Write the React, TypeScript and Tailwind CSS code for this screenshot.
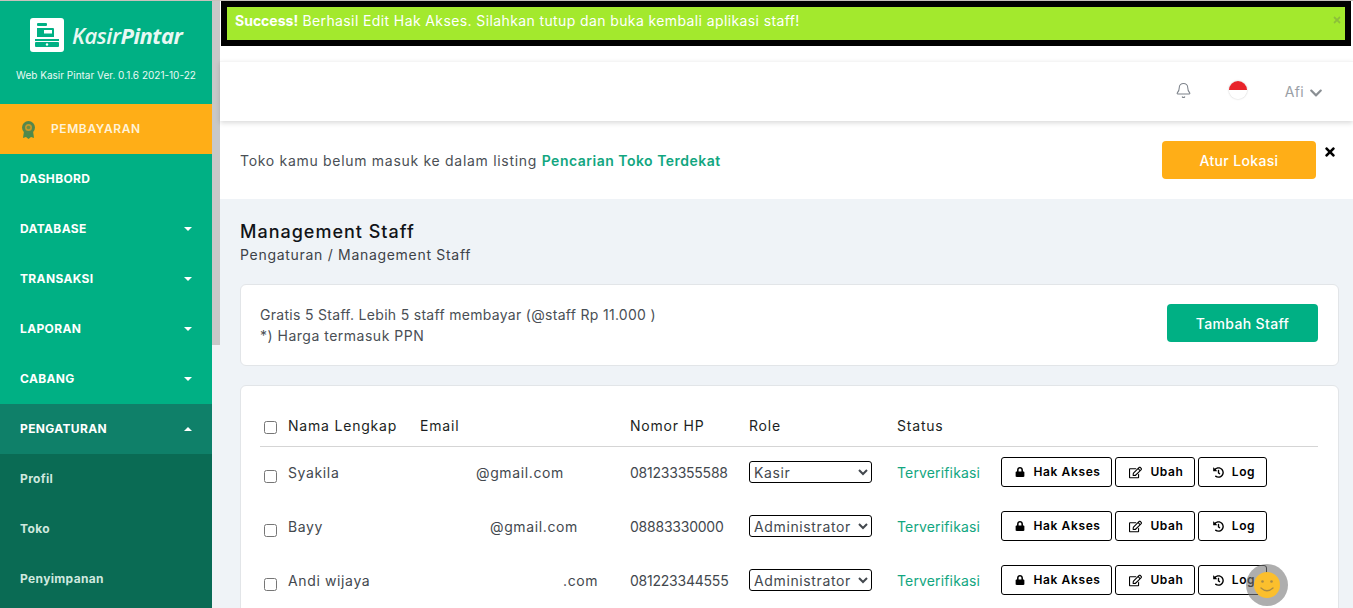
import { Bell } from 'lucide-react'
import { FaChevronDown, FaHistory, FaLock, FaRegEdit, FaTimes } from 'react-icons/fa'

const MENU = [
  { label: 'DASHBORD', caret: false },
  { label: 'DATABASE', caret: true },
  { label: 'TRANSAKSI', caret: true },
  { label: 'LAPORAN', caret: true },
  { label: 'CABANG', caret: true },
]

const SUB_MENU = ['Profil', 'Toko', 'Penyimpanan']

const STAFF = [
  { name: 'Syakila', email: '@gmail.com', pad: 'pl-[56px]', phone: '081233355588', role: 'Kasir' },
  { name: 'Bayy', email: '@gmail.com', pad: 'pl-[70px]', phone: '08883330000', role: 'Administrator' },
  { name: 'Andi wijaya', email: '.com', pad: 'pl-[143px]', phone: '081223344555', role: 'Administrator' },
]

const COLS = 'grid grid-cols-[24px_132px_210px_119px_148px_104px_1fr] items-center'

function Caret({ up }: { up?: boolean }) {
  return (
    <svg width="8" height="4" viewBox="0 0 8 4" className={up ? 'rotate-180' : ''}>
      <path d="M0 0h8L4 4z" fill="currentColor" />
    </svg>
  )
}

function Logo() {
  return (
    <div className="flex items-center gap-[8px] pt-[17px] pl-[30px]">
      <div className="w-[34px] h-[34px] bg-white rounded-[3px] flex items-center justify-center">
        <svg width="26" height="26" viewBox="0 0 26 26" fill="#00b084">
          <rect x="3" y="1" width="10" height="3" rx="1" />
          <path d="M3 6h16a1 1 0 0 1 1 1v8H3z" />
          <rect x="10" y="8" width="8" height="3.500" fill="#fff" />
          <rect x="1" y="17" width="24" height="2" />
          <rect x="1" y="20" width="24" height="5" rx="1" />
          <circle cx="13" cy="22.500" r="1.200" fill="#fff" />
        </svg>
      </div>
      <span className="font-['Open_Sans',sans-serif] italic font-semibold text-[22px] leading-[34px] text-[#e8f8f3] tracking-[-0.02em]">
        Kasir<span className="font-bold">Pintar</span>
      </span>
    </div>
  )
}

function ActionButton({ icon, label, width }: { icon: React.ReactNode; label: string; width: string }) {
  return (
    <button className={`${width} h-[30px] border border-black rounded-[3px] bg-white flex items-center justify-center gap-[8px] pl-[3px] text-[12px] font-semibold text-black`}>
      {icon}
      {label}
    </button>
  )
}

export default function App() {
  return (
    <div className="h-screen overflow-hidden flex flex-col bg-white font-['Inter',sans-serif] text-[14px] tracking-[0.045em]">
      <div className="h-px bg-[#c8c2bd]" />
      <div className="flex flex-1 min-h-0">

        {/* Sidebar */}
        <aside className="w-[212px] shrink-0 bg-[#00b084] text-white flex flex-col tracking-[0.35px]">
          <div className="h-[103px]">
            <Logo />
            <p className="text-[10px] text-center mt-[16px] tracking-normal text-[#eafaf5]">Web Kasir Pintar Ver. 0.1.6 2021-10-22</p>
          </div>
          <div className="h-[50px] bg-[#ffae17] flex items-center pl-[20px] gap-[14px] text-[12px] font-semibold text-[#fff3d8] tracking-[0.6px]">
            <svg width="17" height="19" viewBox="0 0 17 19">
              <path d="M4 11l-1 7 3-1 2.500 2 2.500-2 3 1-1-7z" fill="#4e8a4c" />
              <circle cx="8.500" cy="7.500" r="6.500" fill="#55874c" />
              <circle cx="8.500" cy="7.500" r="3.500" fill="#c59a2a" />
              <circle cx="8.500" cy="7.500" r="1.800" fill="#6f8f3f" />
            </svg>
            PEMBAYARAN
          </div>
          {MENU.map(m => (
            <div key={m.label} className="h-[50px] flex items-center justify-between pl-[20px] pr-[20px] text-[12px] font-bold">
              {m.label}
              {m.caret && <Caret />}
            </div>
          ))}
          <div className="h-[50px] bg-[#0f8069] flex items-center justify-between pl-[20px] pr-[20px] text-[12px] font-bold">
            PENGATURAN
            <Caret up />
          </div>
          <div className="flex-1 bg-[#0a6b54] text-[#cfe8df]">
            {SUB_MENU.map(s => (
              <div key={s} className="h-[50px] flex items-center pl-[20px] text-[12px] font-bold">{s}</div>
            ))}
          </div>
        </aside>

        {/* Scrollbar */}
        <div className="w-[8px] shrink-0 bg-[#f1f3f5]">
          <div className="h-[344px] bg-[#c8c8c8]" />
        </div>

        <main className="flex-1 min-w-0 bg-[#eff3f7]">
          {/* Alert */}
          <div className="bg-white h-[60px]">
            <div className="ml-px mr-[2px] h-[45px] border-[6px] border-black bg-[#a3e92d] flex items-center justify-between pl-[8px] pr-[3px] pb-[7px] text-white">
              <p className="text-[14px] tracking-[0.39px]"><strong className="font-bold tracking-normal">Success!</strong> Berhasil Edit Hak Akses. Silahkan tutup dan buka kembali aplikasi staff!</p>
              <FaTimes className="text-[#8cc03a] text-[10px]" />
            </div>
          </div>

          {/* Topbar */}
          <header className="relative h-[60px] bg-white border-t border-[#f5f5f5] shadow-[0_2px_5px_rgba(0,0,0,0.15)] flex items-center justify-end pr-[30px] text-[#9aa0a6]">
            <Bell size={17} strokeWidth={1.5} className="mr-[37px] mb-[3px] text-[#7c828a]" />
            <div className="w-[18px] h-[18px] rounded-full overflow-hidden mr-[38px] shadow-[0_0_2px_rgba(0,0,0,0.25)] mb-[3px]">
              <div className="h-[9px] bg-[#e8232a]" />
              <div className="h-[9px] bg-white" />
            </div>
            <span className="mr-[5px] tracking-[0.35px]">Afi</span>
            <FaChevronDown className="mt-[3px] text-[#8a8f94] text-[14px]" />
          </header>

          {/* Location banner */}
          <div className="h-[78px] bg-white flex items-center justify-between pl-[20px] pr-[37px]">
            <p className="text-[#4a4f55] tracking-[0.7px]">Toko kamu belum masuk ke dalam listing <span className="font-semibold text-[#12a67f] tracking-[0.5px]">Pencarian Toko Terdekat</span></p>
            <div className="relative">
              <button className="w-[154px] h-[38px] rounded-[4px] bg-[#ffae17] text-white font-medium tracking-[0.35px]">Atur Lokasi</button>
              <FaTimes className="absolute left-[161px] top-[4px] text-black text-[14px]" />
            </div>
          </div>

          <div className="pl-[20px] pr-[14px]">
            <h1 className="mt-[22px] text-[18px] leading-[22px] font-medium tracking-[1px] text-[#111418]">Management Staff</h1>
            <p className="mt-[2px] leading-[20px] text-[#3d4248] tracking-[0.7px]">Pengaturan / Management Staff</p>

            {/* Info card */}
            <section className="mt-[19px] h-[82px] bg-white border border-[#e2e5e8] rounded-[6px] flex items-start justify-between pt-[19px] pl-[19px] pr-[20px] text-[#4a4f55]">
              <div className="leading-[21px]">
                <p className="tracking-[0.3px]">Gratis 5 Staff. Lebih 5 staff membayar (@staff Rp 11.000 )</p>
                <p className="tracking-[0.5px]">*) Harga termasuk PPN</p>
              </div>
              <button className="w-[151px] h-[38px] rounded-[4px] bg-[#00b084] text-white font-medium tracking-[0.35px]">Tambah Staff</button>
            </section>

            {/* Staff table */}
            <section className="mt-[19px] bg-white border border-[#e2e5e8] rounded-[6px] pl-[19px] pr-[20px] pt-[20px] pb-[20px] text-[#43484e]">
              <div className={`${COLS} h-[41px] border-b border-[#d5d5d5] pl-[4px] pb-[2px] text-[#1c1f23] tracking-[0.8px]`}>
                <input type="checkbox" className="w-[13px] h-[13px] mt-[4px]" />
                <span>Nama Lengkap</span>
                <span>Email</span>
                <span>Nomor HP</span>
                <span>Role</span>
                <span>Status</span>
              </div>
              {STAFF.map(s => (
                <div key={s.name} className={`${COLS} h-[54px] pl-[4px] pb-[4px]`}>
                  <input type="checkbox" className="w-[13px] h-[13px] mt-[8px]" />
                  <span>{s.name}</span>
                  <span className={s.pad}>{s.email}</span>
                  <span className="tracking-[-0.23px]">{s.phone}</span>
                  <select defaultValue={s.role} className="w-[123px] h-[22px] border border-black rounded-[3px] bg-white text-[#43484e]">
                    <option>Kasir</option>
                    <option>Administrator</option>
                  </select>
                  <span className="text-[#12a67f] tracking-[0.15px]">Terverifikasi</span>
                  <div className="flex gap-[3px]">
                    <ActionButton width="w-[111px]" label="Hak Akses" icon={<FaLock className="text-[10px]" />} />
                    <ActionButton width="w-[80px]" label="Ubah" icon={<FaRegEdit className="text-[13px]" />} />
                    <ActionButton width="w-[69px]" label="Log" icon={<FaHistory className="text-[11px]" />} />
                  </div>
                </div>
              ))}
            </section>
          </div>
        </main>
      </div>

      {/* Chat widget */}
      <div className="fixed left-[1246px] top-[564px] w-[42px] h-[42px] rounded-full bg-[rgba(120,120,120,0.6)] flex items-center justify-center">
        <svg width="26" height="26" viewBox="0 0 26 26">
          <circle cx="13" cy="13" r="13" fill="#fbbf2d" />
          <circle cx="8.500" cy="9.500" r="1.300" fill="#a98a45" />
          <circle cx="17.500" cy="9.500" r="1.300" fill="#a98a45" />
          <path d="M7 16q6 5.500 12 0" fill="none" stroke="#a98a45" strokeWidth="1.300" strokeLinecap="round" />
        </svg>
      </div>
    </div>
  )
}
